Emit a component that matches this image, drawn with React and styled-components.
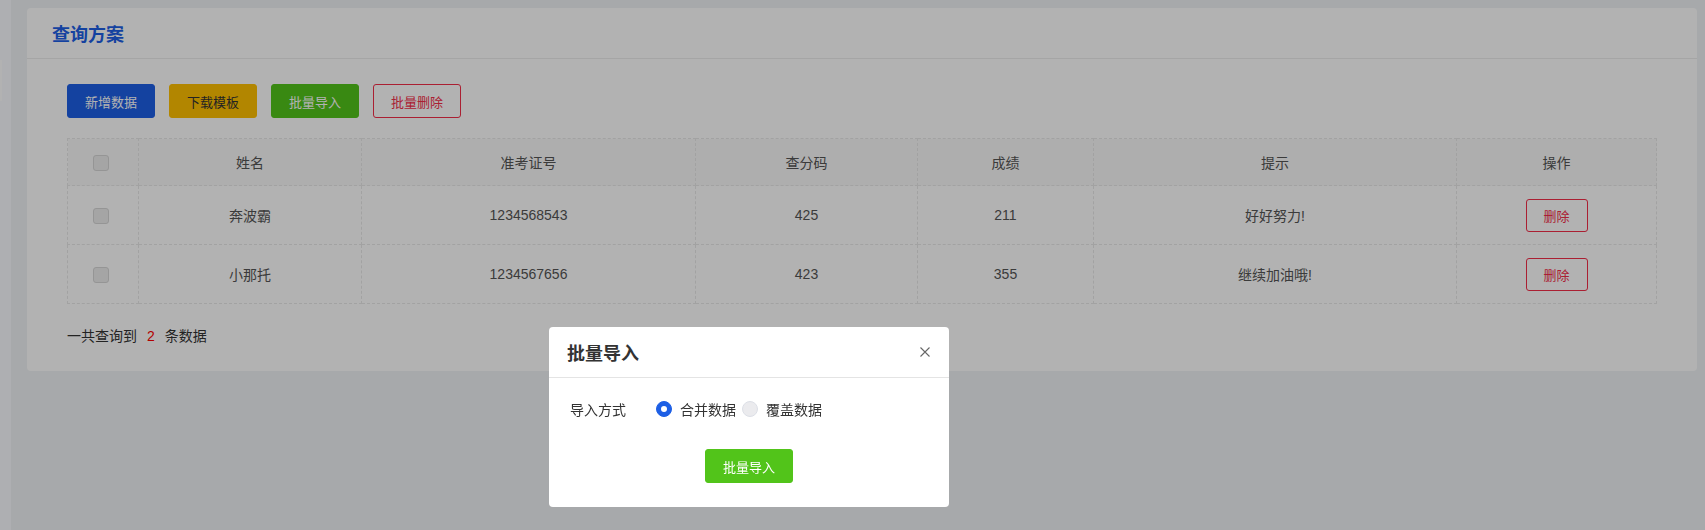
import React from "react";
import styled, { createGlobalStyle } from "styled-components";

const Global = createGlobalStyle`
  html, body { margin: 0; padding: 0; }
  body {
    background: #f0f2f5;
    font-family: "Liberation Sans", "Noto Sans CJK SC", sans-serif;
    color: #333;
    overflow: hidden;
  }
  * { box-sizing: border-box; }
`;

const Layout = styled.div`
  display: flex;
  min-height: 530px;
`;

const Sidebar = styled.aside`
  width: 11px;
  flex: none;
  background: #fafbff;
  padding-top: 60px;
`;

const SideMarker = styled.div`
  width: 2px;
  height: 41px;
  background: #ffffff;
`;

const Main = styled.main`
  flex: 1;
  padding: 8px 8px 0 16px;
`;

const Panel = styled.section`
  background: #fff;
  border-radius: 4px;
`;

const PanelHeader = styled.header`
  height: 51px;
  display: flex;
  align-items: center;
  padding: 0 25px;
  border-bottom: 1px solid #ececec;
`;

const PanelTitle = styled.h2`
  margin: 0;
  font-size: 18px;
  font-weight: 700;
  color: #1d5fe5;
  padding-bottom: 1px;
`;

const PanelBody = styled.div`
  padding: 25px 40px 25px;
`;

const Toolbar = styled.div`
  display: flex;
  gap: 14px;
  margin-bottom: 20px;
`;

const variants = {
  primary: { bg: "#1d5fe5", border: "#1d5fe5", color: "#fff" },
  warning: { bg: "#ffc000", border: "#ffc000", color: "#333" },
  success: { bg: "#52c41a", border: "#52c41a", color: "#fff" },
  danger: { bg: "#fff", border: "#f42d48", color: "#f42d48" },
};

const Button = styled.button`
  width: ${(p) => p.$w || 88}px;
  height: ${(p) => p.$h || 34}px;
  border-radius: 3px;
  border: 1px solid ${(p) => variants[p.$variant].border};
  background: ${(p) => variants[p.$variant].bg};
  color: ${(p) => variants[p.$variant].color};
  font-family: inherit;
  font-size: 13px;
  padding: 0;
  cursor: pointer;
`;

const Table = styled.table`
  width: 100%;
  border-collapse: collapse;
  table-layout: fixed;
  font-size: 14px;
  color: #555;
`;

const HeadRow = styled.tr`
  height: 47px;
  background: #fafafa;
`;

const BodyRow = styled.tr`
  height: 59px;
`;

const Th = styled.th`
  font-weight: 400;
  border: 1px dashed #e8e8e8;
  text-align: center;
  padding: 0;
`;

const Td = styled.td`
  border: 1px dashed #e8e8e8;
  text-align: center;
  padding: 0;
`;

const CheckBox = styled.span`
  display: inline-block;
  width: 16px;
  height: 16px;
  border-radius: 3px;
  background: #ececec;
  border: 1px solid #d6d6d6;
  vertical-align: middle;
  margin-right: 4px;
`;

const Footer = styled.div`
  margin-top: 22px;
  line-height: 20px;
  font-size: 14px;
  color: #333;
`;

const Count = styled.span`
  color: #ff0000;
  margin: 0 10px;
`;

const Overlay = styled.div`
  position: fixed;
  inset: 0;
  background: rgba(0, 0, 0, 0.3);
`;

const Modal = styled.div`
  position: absolute;
  left: 549px;
  top: 327px;
  width: 400px;
  height: 180px;
  background: #fff;
  border-radius: 4px;
  display: flex;
  flex-direction: column;
`;

const ModalHeader = styled.div`
  height: 51px;
  display: flex;
  align-items: center;
  justify-content: space-between;
  padding: 0 19px 0 18px;
  border-bottom: 1px solid #e4e4e4;
`;

const ModalTitle = styled.h3`
  margin: 0;
  font-size: 18px;
  font-weight: 700;
  color: #333;
`;

const CloseButton = styled.button`
  width: 10px;
  height: 10px;
  border: 0;
  background: none;
  padding: 0;
  display: flex;
  cursor: pointer;
`;

const ModalBody = styled.div`
  flex: 1;
  padding: 20px 21px 24px;
  display: flex;
  flex-direction: column;
`;

const FormRow = styled.div`
  display: flex;
  align-items: center;
  height: 22px;
  font-size: 14px;
  color: #333;
`;

const Label = styled.span`
  width: 86px;
  flex: none;
`;

const RadioOption = styled.label`
  display: inline-flex;
  align-items: center;
  gap: 8px;
  margin-right: 6px;
`;

const RadioDot = styled.span`
  width: 16px;
  height: 16px;
  border-radius: 50%;
  flex: none;
  background: ${(p) => (p.$checked ? "#1d5fe5" : "#ebebee")};
  border: 1px solid ${(p) => (p.$checked ? "#1d5fe5" : "#dcdfe6")};
  display: flex;
  align-items: center;
  justify-content: center;
  &::after {
    content: "";
    width: 6px;
    height: 6px;
    border-radius: 50%;
    background: #fff;
    display: ${(p) => (p.$checked ? "block" : "none")};
  }
`;

const ModalActions = styled.div`
  margin-top: auto;
  display: flex;
  justify-content: center;
`;

const rows = [
  { name: "奔波霸", id: "1234568543", code: "425", score: "211", tip: "好好努力!" },
  { name: "小那托", id: "1234567656", code: "423", score: "355", tip: "继续加油哦!" },
];

const colWidths = [71, 223, 334, 222, 176, 363, 200];

export default function App() {
  return (
    <>
      <Global />
      <Layout>
        <Sidebar>
          <SideMarker />
        </Sidebar>
        <Main>
          <Panel>
            <PanelHeader>
              <PanelTitle>查询方案</PanelTitle>
            </PanelHeader>
            <PanelBody>
              <Toolbar>
                <Button $variant="primary">新增数据</Button>
                <Button $variant="warning">下载模板</Button>
                <Button $variant="success">批量导入</Button>
                <Button $variant="danger">批量删除</Button>
              </Toolbar>
              <Table>
                <colgroup>
                  {colWidths.map((w, i) => (
                    <col key={i} style={{ width: w }} />
                  ))}
                </colgroup>
                <thead>
                  <HeadRow>
                    <Th><CheckBox /></Th>
                    <Th>姓名</Th>
                    <Th>准考证号</Th>
                    <Th>查分码</Th>
                    <Th>成绩</Th>
                    <Th>提示</Th>
                    <Th>操作</Th>
                  </HeadRow>
                </thead>
                <tbody>
                  {rows.map((r) => (
                    <BodyRow key={r.id}>
                      <Td><CheckBox /></Td>
                      <Td>{r.name}</Td>
                      <Td>{r.id}</Td>
                      <Td>{r.code}</Td>
                      <Td>{r.score}</Td>
                      <Td>{r.tip}</Td>
                      <Td>
                        <Button $variant="danger" $w={62} $h={33}>删除</Button>
                      </Td>
                    </BodyRow>
                  ))}
                </tbody>
              </Table>
              <Footer>
                一共查询到<Count>2</Count>条数据
              </Footer>
            </PanelBody>
          </Panel>
        </Main>
      </Layout>
      <Overlay>
        <Modal>
          <ModalHeader>
            <ModalTitle>批量导入</ModalTitle>
            <CloseButton aria-label="close">
              <svg width="10" height="10" viewBox="0 0 10 10">
                <path d="M0.5 0.5L9.5 9.5M9.5 0.5L0.5 9.5" stroke="#666" strokeWidth="1.1" />
              </svg>
            </CloseButton>
          </ModalHeader>
          <ModalBody>
            <FormRow>
              <Label>导入方式</Label>
              <RadioOption>
                <RadioDot $checked />
                合并数据
              </RadioOption>
              <RadioOption>
                <RadioDot />
                覆盖数据
              </RadioOption>
            </FormRow>
            <ModalActions>
              <Button $variant="success">批量导入</Button>
            </ModalActions>
          </ModalBody>
        </Modal>
      </Overlay>
    </>
  );
}
